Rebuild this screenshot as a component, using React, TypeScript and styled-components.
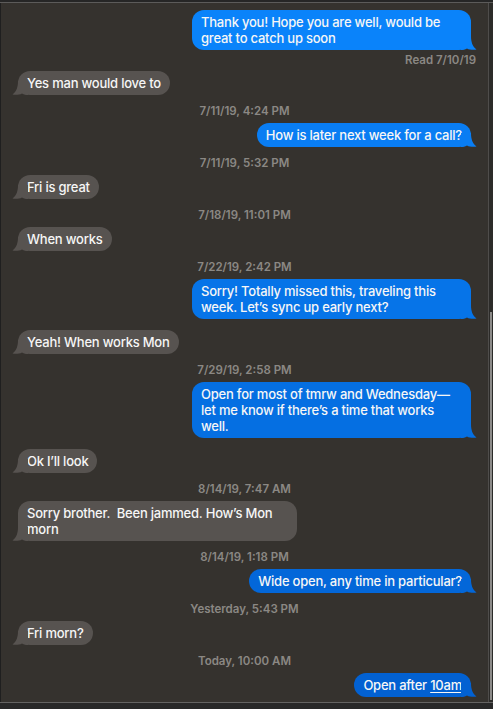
import React from "react";
import styled, { createGlobalStyle } from "styled-components";

type Item =
  | { kind: "msg"; from: "me" | "them"; text: string; link?: string }
  | { kind: "stamp"; text: string }
  | { kind: "read"; text: string };

const items: Item[] = [
  { kind: "msg", from: "me", text: "Thank you! Hope you are well, would be great to catch up soon" },
  { kind: "read", text: "Read 7/10/19" },
  { kind: "msg", from: "them", text: "Yes man would love to" },
  { kind: "stamp", text: "7/11/19, 4:24 PM" },
  { kind: "msg", from: "me", text: "How is later next week for a call?" },
  { kind: "stamp", text: "7/11/19, 5:32 PM" },
  { kind: "msg", from: "them", text: "Fri is great" },
  { kind: "stamp", text: "7/18/19, 11:01 PM" },
  { kind: "msg", from: "them", text: "When works" },
  { kind: "stamp", text: "7/22/19, 2:42 PM" },
  { kind: "msg", from: "me", text: "Sorry! Totally missed this, traveling this week. Let\u2019s sync up early next?" },
  { kind: "msg", from: "them", text: "Yeah! When works Mon" },
  { kind: "stamp", text: "7/29/19, 2:58 PM" },
  { kind: "msg", from: "me", text: "Open for most of tmrw and Wednesday\u2014 let me know if there\u2019s a time that works well." },
  { kind: "msg", from: "them", text: "Ok I\u2019ll look" },
  { kind: "stamp", text: "8/14/19, 7:47 AM" },
  { kind: "msg", from: "them", text: "Sorry brother.\u00a0 Been jammed. How\u2019s Mon morn" },
  { kind: "stamp", text: "8/14/19, 1:18 PM" },
  { kind: "msg", from: "me", text: "Wide open, any time in particular?" },
  { kind: "stamp", text: "Yesterday, 5:43 PM" },
  { kind: "msg", from: "them", text: "Fri morn?" },
  { kind: "stamp", text: "Today, 10:00 AM" },
  { kind: "msg", from: "me", text: "Open after ", link: "10am" },
];

const GRAY = "#575350";

// blue bubbles darken towards the bottom of the window, like Messages does
function blueAt(t: number) {
  const a = [10, 131, 250];
  const b = [2, 97, 210];
  const c = a.map((v, i) => Math.round(v + (b[i] - v) * t));
  return `rgb(${c[0]}, ${c[1]}, ${c[2]})`;
}

function gapFor(prev: Item | undefined, cur: Item) {
  if (!prev) return 0;
  if (cur.kind === "stamp") return 9;
  if (cur.kind === "read") return 3;
  if (prev.kind === "read") return 4;
  if (prev.kind === "stamp") return 5;
  return 11;
}

const Tail: React.FC<{ color: string; mine: boolean }> = ({ color, mine }) => (
  <TailSvg $mine={mine} width="16" height="14" viewBox="0 0 16 14">
    <path
      d="M0 0 H10 C10 6 11.5 10.5 15.5 13.6 C12 14.2 8.5 13.8 6 12.4 C4 13.6 2 14 0 14 Z"
      fill={color}
    />
  </TailSvg>
);

export default function App() {
  return (
    <>
      <GlobalStyle />
      <Frame>
        <TopEdge />
        <Body>
          <LeftEdge />
          <Chat>
            {items.map((it, i) => {
              const gap = gapFor(items[i - 1], it);
              if (it.kind === "stamp")
                return (
                  <Stamp key={i} $gap={gap}>
                    {it.text}
                  </Stamp>
                );
              if (it.kind === "read")
                return (
                  <Read key={i} $gap={gap}>
                    {it.text}
                  </Read>
                );
              const mine = it.from === "me";
              const color = mine ? blueAt(i / (items.length - 1)) : GRAY;
              return (
                <Row key={i} $gap={gap} $mine={mine}>
                  <Bubble $color={color}>
                    {it.text}
                    {it.link && <Link>{it.link}</Link>}
                    <Tail color={color} mine={mine} />
                  </Bubble>
                </Row>
              );
            })}
          </Chat>
          <Track>
            <Thumb />
          </Track>
        </Body>
        <BottomEdge />
      </Frame>
    </>
  );
}

const GlobalStyle = createGlobalStyle`
  html, body {
    margin: 0;
    background: #262626;
  }
  #root {
    height: 100vh;
  }
`;

const Frame = styled.div`
  height: 709px;
  display: flex;
  flex-direction: column;
  background: #242424;
  overflow: hidden;
`;

const TopEdge = styled.div`
  height: 2px;
  border-bottom: 1px solid #5c5b5a;
  background: #262626;
`;

const Body = styled.div`
  flex: 1;
  display: flex;
  min-height: 0;
`;

const LeftEdge = styled.div`
  width: 1px;
  background: #1f1f1f;
`;

const Chat = styled.div`
  flex: 1;
  display: flex;
  flex-direction: column;
  padding: 7px 17px 0 17px;
  background: #35322e;
  overflow: hidden;
  font-family: Inter, "Noto Sans", sans-serif;
`;

const Track = styled.div`
  width: 4px;
  border-left: 1px solid #4f4d4b;
  background: #2c2b29;
  display: flex;
  flex-direction: column;
  align-items: center;
`;

const Thumb = styled.div`
  margin-top: 309px;
  flex: 1;
  width: 2px;
  background: #8c8b89;
  margin-bottom: 2px;
`;

const BottomEdge = styled.div`
  height: 6px;
  border-top: 1px solid #646362;
  background: #282828;
`;

const Row = styled.div<{ $gap: number; $mine: boolean }>`
  display: flex;
  justify-content: ${(p) => (p.$mine ? "flex-end" : "flex-start")};
  margin-top: ${(p) => p.$gap}px;
  flex-shrink: 0;
`;

const Bubble = styled.div<{ $color: string }>`
  position: relative;
  max-width: 279px;
  box-sizing: border-box;
  padding: 4px 9px;
  border-radius: 12px;
  background: ${(p) => p.$color};
  color: #f6f6f6;
  font-size: 13px;
  font-weight: 500;
  line-height: 16px;
  letter-spacing: -0.22px;
`;

const TailSvg = styled.svg<{ $mine: boolean }>`
  position: absolute;
  bottom: 0;
  ${(p) => (p.$mine ? "right: -6px;" : "left: -6px; transform: scaleX(-1);")}
  display: block;
`;

const Link = styled.span`
  text-decoration: underline;
  text-underline-offset: 2px;
`;

const Stamp = styled.div<{ $gap: number }>`
  margin-top: ${(p) => p.$gap}px;
  text-align: center;
  font-size: 11.5px;
  line-height: 14px;
  font-weight: 600;
  color: #8b8884;
  flex-shrink: 0;
`;

const Read = styled(Stamp)`
  text-align: right;
  margin-right: -5px;
`;
